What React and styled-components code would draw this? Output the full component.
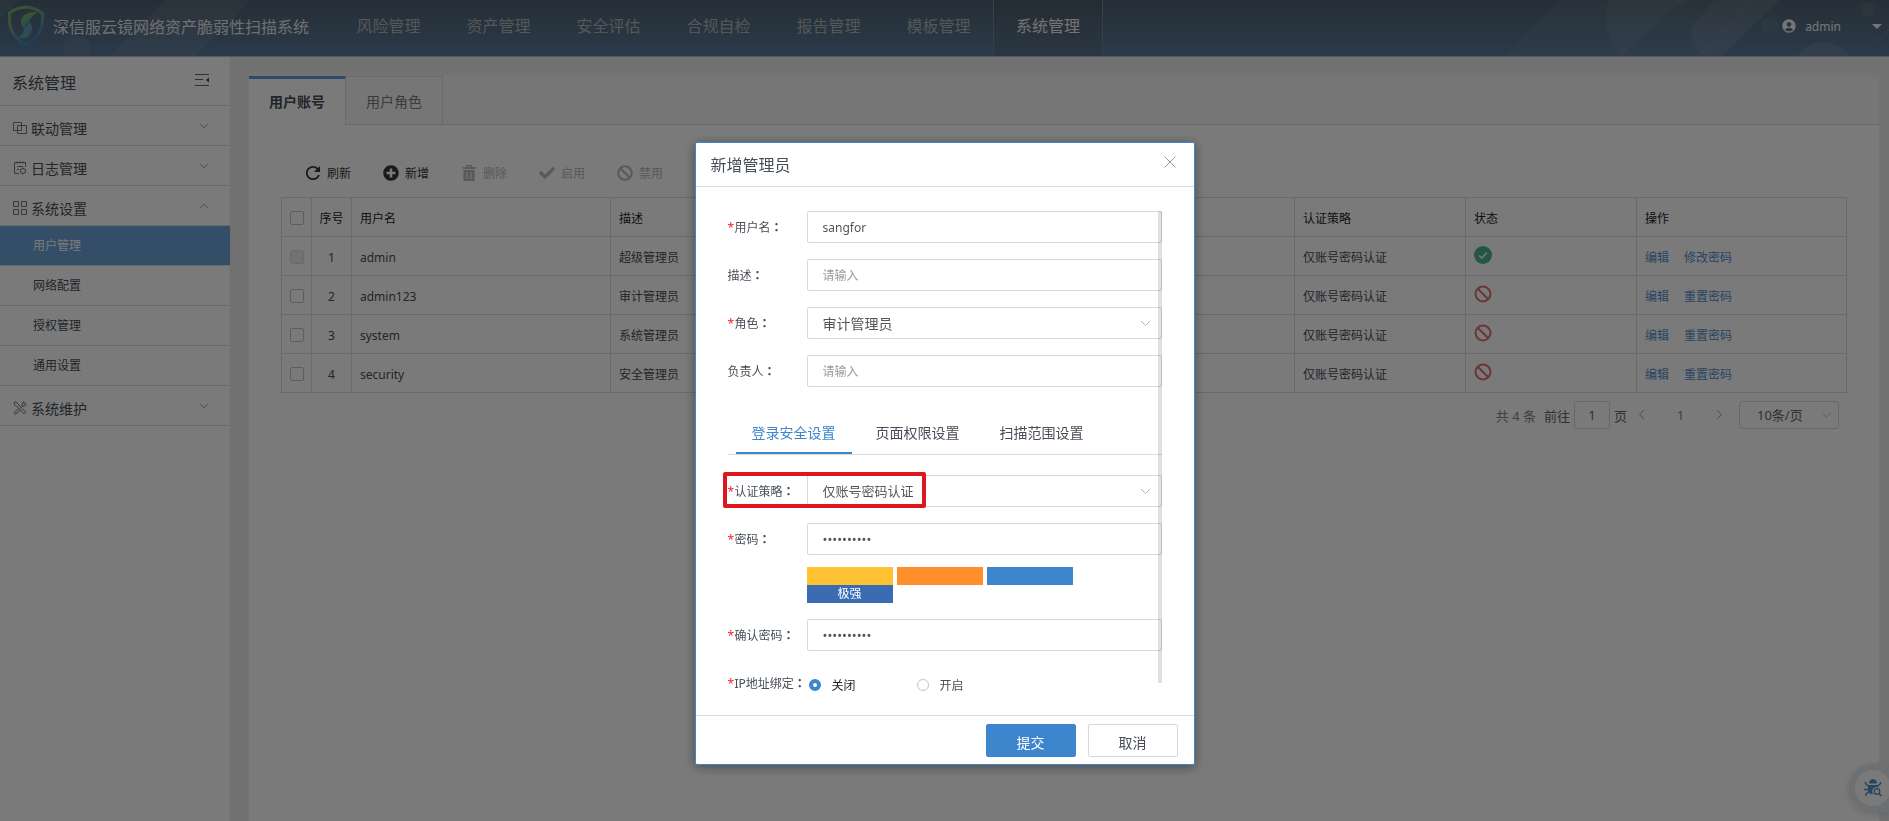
import React, { useState } from "react";
import styled, { createGlobalStyle, css } from "styled-components";
import { IoMdRefresh } from "react-icons/io";
import { FaPlusCircle, FaCheck, FaBan } from "react-icons/fa";
import { MdAccountCircle } from "react-icons/md";

const c = {
  blue: "#3d85cc",
  text: "#474e57",
  line: "#dcdcdc",
  muted: "#999",
};

const GlobalStyle = createGlobalStyle`
  *, *::before, *::after { box-sizing: border-box; }
  body {
    margin: 0;
    font-family: "Noto Sans", "Noto Sans CJK SC", sans-serif;
    font-size: 12px;
    color: ${c.text};
  }
  button, input, select { font-family: inherit; color: inherit; }
`;

const Page = styled.div`
  min-height: 100vh;
  display: flex;
  flex-direction: column;
  background: #efefef;
`;

/* ---------- header ---------- */
const Header = styled.header`
  position: relative;
  height: 57px;
  display: flex;
  align-items: stretch;
  background: linear-gradient(#4f6272, #5a7a9a);
  border-bottom: 1px solid #b4bcc4;
  overflow: hidden;
`;
const Pattern = styled.svg`
  position: absolute;
  top: 0;
  ${(p) => (p.$side === "left" ? "left: 0;" : "right: 0;")}
`;
const Brand = styled.div`
  position: relative;
  display: flex;
  align-items: center;
  gap: 8px;
  width: 333px;
  padding-left: 7px;
  padding-bottom: 4px;
  font-size: 16px;
  color: #e8e8e8;
  white-space: nowrap;
`;
const Nav = styled.nav`
  position: relative;
  display: flex;
  flex: 1;
`;
const NavLink = styled.a`
  width: 110px;
  line-height: 52px;
  text-align: center;
  font-size: 16px;
  text-decoration: none;
  border-left: 1px solid transparent;
  color: #b0b4b9;
  ${(p) =>
    p.$active &&
    css`
      color: #f0f0f0;
      border-color: #6b88a4;
      border-right: 1px solid #6b88a4;
      background: rgba(80, 40, 10, 0.08);
    `}
`;
const UserMenu = styled.button`
  position: relative;
  display: flex;
  align-items: center;
  padding: 0 7px 4px 0;
  border: 0;
  background: none;
  color: #f4f4f4;
  font-size: 12px;
`;
const UserName = styled.span`
  margin: 0 31px 0 8px;
`;
const Caret = styled.span`
  border: 5px solid transparent;
  border-top-color: #f4f4f4;
  border-bottom: 0;
`;

/* ---------- sidebar ---------- */
const Body = styled.div`
  flex: 1;
  display: flex;
`;
const Sidebar = styled.aside`
  width: 231px;
  flex: none;
  background: #fff;
  border-right: 1px solid #e6e6e6;
`;
const SideHead = styled.div`
  height: 49px;
  padding: 2px 21px 0 12px;
  display: flex;
  align-items: center;
  justify-content: space-between;
  border-bottom: 1px solid #e0e0e0;
  font-size: 16px;
`;
const IconButton = styled.button`
  display: flex;
  padding: 0;
  border: 0;
  background: none;
`;
const SideItem = styled.button`
  width: 100%;
  height: 40px;
  padding: 4px 21px 0 13px;
  display: flex;
  align-items: center;
  gap: 4px;
  border: 0;
  border-bottom: 1px solid #e0e0e0;
  background: none;
  font-size: 14px;
  text-align: left;
`;
const SideArrow = styled.span`
  display: flex;
  padding-bottom: 4px;
`;
const Grow = styled.span`
  flex: 1;
`;
const SubItem = styled.a`
  display: block;
  height: 40px;
  line-height: 40px;
  padding-left: 33px;
  border-bottom: 1px solid #e0e0e0;
  color: ${c.text};
  text-decoration: none;
  ${(p) =>
    p.$active &&
    css`
      color: #fff;
      background: #6fa4d8;
    `}
`;

/* ---------- main panel ---------- */
const Main = styled.main`
  flex: 1;
  min-width: 0;
  display: flex;
  padding: 19px 10px 0 18px;
`;
const Panel = styled.section`
  flex: 1;
  min-width: 0;
  background: #fff;
`;
const PageTabs = styled.div`
  display: flex;
  height: 49px;
  background: #f7f7f7;
  border-bottom: 1px solid #dedede;
`;
const PageTab = styled.button`
  width: 97px;
  height: 49px;
  padding: 0;
  border: 1px solid #dedede;
  border-left: 0;
  background: none;
  font-size: 14px;
  color: #777d85;
  ${(p) =>
    p.$active &&
    css`
      padding-bottom: 2px;
      border-bottom: 0;
      border-top: 3px solid #5d9cdb;
      background: #fff;
      font-weight: bold;
      color: ${c.text};
    `}
`;
const Toolbar = styled.div`
  display: flex;
  gap: 32px;
  padding: 36px 56px 0;
`;
const Tool = styled.button`
  display: flex;
  align-items: center;
  gap: 6px;
  height: 24px;
  padding: 0;
  border: 0;
  background: none;
  font-size: 12px;
  white-space: nowrap;
  color: #33383d;
  svg { width: 16px; height: 16px; flex: none; }
  &:disabled { color: #bababa; }
`;
const TableArea = styled.div`
  padding: 12px 32px 0;
`;
const Table = styled.table`
  width: 100%;
  table-layout: fixed;
  border-collapse: collapse;
  th, td {
    height: 39px;
    padding: 2px 8px 0;
    border: 1px solid #dedede;
    text-align: left;
    font-weight: normal;
    white-space: nowrap;
  }
  th { color: #1f2429; }
`;
const Centered = styled.td`
  && { text-align: center; padding: 2px 0 0; }
`;
const Col = styled.col`
  width: ${(p) => p.$w};
`;
const Check = styled.input`
  appearance: none;
  display: block;
  width: 14px;
  height: 14px;
  margin: 0 auto;
  border: 1px solid #c4c4c4;
  border-radius: 2px;
  background: #fff;
  &:disabled { background: #efefef; border-color: #dedede; }
`;
const Action = styled.a`
  margin-right: 15px;
  color: #5590cc;
  text-decoration: none;
`;
const StatusSvg = styled.svg`
  display: block;
  margin-bottom: 4px;
`;
const Pager = styled.div`
  display: flex;
  align-items: center;
  justify-content: flex-end;
  height: 28px;
  margin: 8px 8px 0 0;
  font-size: 13px;
  color: #666;
`;
const PagerText = styled.span`
  margin-right: ${(p) => p.$gap}px;
  color: ${(p) => (p.$light ? "#888" : "#666")};
`;
const PageInput = styled.input`
  width: 36px;
  height: 28px;
  margin-right: 4px;
  border: 1px solid #d8d8d8;
  border-radius: 3px;
  text-align: center;
  font-size: 13px;
`;
const PageButton = styled.button`
  width: ${(p) => p.$w}px;
  padding: 0;
  border: 0;
  background: none;
  font-size: 13px;
  color: ${(p) => (p.$current ? "#5590cc" : "#999")};
`;
const Helper = styled.button`
  position: fixed;
  right: 0;
  bottom: 9px;
  width: 40px;
  height: 48px;
  padding: 0 0 1px 6px;
  display: flex;
  align-items: center;
  border: 0;
  border-radius: 24px 0 0 24px;
  background: #e4eaf0;
  box-shadow: 0 2px 8px rgba(0, 0, 0, 0.15);
`;
const HelperDisc = styled.span`
  display: flex;
  flex: none;
  align-items: center;
  justify-content: center;
  width: 36px;
  height: 36px;
  border-radius: 50%;
  background: #fff;
`;

/* ---------- dialog ---------- */
const Overlay = styled.div`
  position: fixed;
  inset: 0;
  display: flex;
  justify-content: center;
  align-items: flex-start;
  padding-top: 142px;
  background: rgba(0, 0, 0, 0.52);
`;
const Dialog = styled.div`
  width: 500px;
  background: #fff;
  border: 1px solid ${c.blue};
  border-radius: 2px;
  box-shadow: 0 2px 12px rgba(0, 0, 0, 0.4);
`;
const DialogHead = styled.div`
  height: 44px;
  padding: 0 18px 0 15px;
  display: flex;
  align-items: center;
  justify-content: space-between;
  border-bottom: 1px solid ${c.line};
  ${IconButton} { padding-bottom: 6px; }
`;
const DialogTitle = styled.h2`
  margin: 0;
  font-size: 16px;
  line-height: 24px;
  font-weight: normal;
`;
const DialogBody = styled.div`
  padding: 24px 32px 12px;
`;
const Form = styled.form`
  position: relative;
  display: flex;
  flex-direction: column;
  gap: 16px;
`;
const Row = styled.div`
  display: flex;
  align-items: flex-start;
`;
const LabelBox = styled.label`
  width: 79px;
  height: 32px;
  flex: none;
  line-height: 32px;
  white-space: nowrap;
`;
const Star = styled.span`
  display: inline-block;
  width: 7px;
  font-size: 12px;
  color: #f5222d;
`;
const Colon = styled.span`
  font-family: "Noto Sans CJK TC", sans-serif;
  font-weight: bold;
`;
const Field = styled.div`
  flex: 1;
  min-width: 0;
`;
const fieldBox = css`
  display: block;
  width: 100%;
  height: 32px;
  padding: 0 15px;
  border: 1px solid #d9d9d9;
  border-radius: 2px;
  background: #fff;
  color: #555;
  outline: 0;
`;
const Input = styled.input`
  ${fieldBox}
  font-size: ${(p) => (p.type === "password" ? 13 : 12)}px;
  &::placeholder { color: ${c.muted}; }
`;
const SelectWrap = styled.div`
  position: relative;
  width: ${(p) => p.$w || "100%"};
`;
const Select = styled.select`
  ${fieldBox}
  appearance: none;
  font-size: ${(p) => (p.$dense ? 13 : 14)}px;
  ${(p) =>
    p.$small &&
    css`
      height: 28px;
      padding: 0 17px;
      font-size: 13px;
      border-radius: 3px;
      color: #666;
    `}
`;
const SelectArrow = styled.span`
  position: absolute;
  display: flex;
  right: ${(p) => p.$right}px;
  top: 0;
  bottom: 0;
  align-items: center;
  pointer-events: none;
`;
const FormTabs = styled.div`
  display: flex;
  gap: 8px;
  margin: 8px 0 4px;
  padding-left: 8px;
  height: 44px;
  border-bottom: 1px solid ${c.line};
`;
const FormTab = styled.button`
  height: 43px;
  padding: 0 16px;
  border: 0;
  border-bottom: 2px solid ${(p) => (p.$active ? c.blue : "transparent")};
  background: none;
  font-size: 14px;
  color: ${(p) => (p.$active ? c.blue : c.text)};
`;
const Strength = styled.div`
  display: flex;
  flex-wrap: wrap;
  column-gap: 4px;
  width: 266px;
  margin-top: 12px;
`;
const StrengthBar = styled.span`
  width: 86px;
  height: 18px;
  line-height: 18px;
  text-align: center;
  color: #fff;
  background: ${(p) => p.$color};
`;
const Marked = styled.div`
  position: relative;
  &::after {
    content: "";
    position: absolute;
    left: -5px;
    top: -3px;
    width: 203px;
    height: 36px;
    border: 4px solid #dc181d;
    border-radius: 2px;
    pointer-events: none;
  }
`;
const Radios = styled.div`
  display: flex;
  align-items: center;
  height: 36px;
  padding-left: 2px;
`;
const RadioLabel = styled.label`
  display: flex;
  align-items: center;
  gap: 11px;
  width: 108px;
  color: ${(p) => (p.$on ? "#222" : c.text)};
`;
const Radio = styled.input`
  appearance: none;
  width: 12px;
  height: 12px;
  margin: 0;
  border: 1px solid #c4c4c4;
  border-radius: 50%;
  &:checked { border: 4px solid ${c.blue}; }
`;
const Thumb = styled.div`
  position: absolute;
  top: 0;
  right: 0;
  width: 4px;
  height: 472px;
  background: rgba(0, 0, 0, 0.12);
`;
const DialogFoot = styled.div`
  display: flex;
  justify-content: flex-end;
  gap: 12px;
  padding: 8px 16px 7px;
  border-top: 1px solid ${c.line};
`;
const Button = styled.button`
  width: 90px;
  height: 33px;
  padding: 2px 0 0;
  border: 1px solid ${(p) => (p.$primary ? c.blue : "#d9d9d9")};
  border-radius: 2px;
  background: ${(p) => (p.$primary ? c.blue : "#fff")};
  color: ${(p) => (p.$primary ? "#fff" : c.text)};
  font-size: 14px;
`;

/* ---------- drawings ---------- */
const Chevron = ({ dir = "down", size = 10, color = "#999" }) => {
  const d = {
    down: "M1 3l4.5 4.5L10 3",
    up: "M1 8l4.5-4.5L10 8",
    left: "M8 1L3.500 5.500 8 10",
    right: "M3 1l4.500 4.500L3 10",
  }[dir];
  return (
    <svg width={size} height={size} viewBox="0 0 11 11" fill="none" stroke={color}>
      <path d={d} />
    </svg>
  );
};

const Logo = () => (
  <svg width="38" height="42" viewBox="0 0 38 42">
    <defs>
      <linearGradient id="lg" x1="0" y1="0" x2="0.5" y2="1">
        <stop offset="0" stopColor="#7cc04a" />
        <stop offset="0.5" stopColor="#6fa98f" />
        <stop offset="1" stopColor="#3f83c9" />
      </linearGradient>
    </defs>
    <path
      d="M19 2C13 2.500 7 4.500 2.500 8 2 18 1.500 31 19 39.500 36 31 36 19 35.500 8.500 31 5 25 2.500 19 2z"
      fill="none"
      stroke="url(#lg)"
      strokeWidth="3"
      opacity=".9"
    />
    <path
      d="M31 7.500c-8-2-16 2-17 8.500-.5 4 1.500 6.500 3.500 8 1-4 3-5 5-8 2-4 3-6 8.500-8.500z"
      fill="url(#lg)"
    />
    <path
      d="M22.500 17c4 4 3 12-2 15-3 2-7 2-10 .5 5-1.500 5-4 6.500-8 1-3 4-4 5.500-7.500z"
      fill="#5c9fb5"
    />
  </svg>
);

const OverlapIcon = () => (
  <svg width="14" height="14" viewBox="0 0 14 14" fill="none" stroke="#777">
    <path d="M4.500 9.500h-4v-8h8v3M4.500 9.500v3h9v-8h-5M8.500 4.500v5h-4v-5h4" />
  </svg>
);
const LogIcon = () => (
  <svg width="14" height="14" viewBox="0 0 14 14" fill="none" stroke="#777">
    <path d="M6 12.500H1.500v-11h11V6M4 .5v2M7 .5v2M10 .5v2M4 5.500h6M4 8.500h2" />
    <circle cx="10" cy="10" r="2.500" />
    <path d="M10 6.500v1M10 12.500v1M7 8.300l.8.5M12.200 11.200l.8.5M7 11.700l.8-.5M12.200 8.800l.8-.5" />
  </svg>
);
const GridIcon = () => (
  <svg width="14" height="14" viewBox="0 0 14 14" fill="none" stroke="#777">
    <path d="M.5.5h5v5h-5zM8.500.5h5v5h-5zM.5 8.500h5v5h-5zM8.500 8.500h5v5h-5z" />
  </svg>
);
const ToolsIcon = () => (
  <svg width="14" height="14" viewBox="0 0 14 14" fill="none" stroke="#777">
    <path d="M1 1.500l2-.8 2 2.300 7.800 8.300-1.500 1.700L3.500 5 1.500 3.800zM8 5.500l1.500-1.500-.2-2L11 .7l.3 2 2 .3-1.500 2-2 .2-1.300 1.400M6 7.500l-5 4.300 1.300 1.600L7.500 9" />
  </svg>
);
const FoldIcon = () => (
  <svg width="14" height="16" viewBox="0 0 14 16">
    <path d="M0 .5h14M0 5.500h8M0 11.500h14" stroke="#666" fill="none" />
    <path d="M14 3.500v5L11 6z" fill="#444" />
  </svg>
);
const TrashIcon = () => (
  <svg viewBox="0 0 16 16" fill="currentColor">
    <path
      fillRule="evenodd"
      d="M1.500 2H5V0h6v2h3.500v2h-13zM6.500 1.200V2h3v-.8zM2.500 5h11v11h-11zM5.500 7v7h1V7zM9.500 7v7h1V7z"
    />
  </svg>
);
const StatusIcon = ({ on }) => (
  <StatusSvg width="18" height="18" viewBox="0 0 18 18" fill="none" role="img">
    {on ? (
      <>
        <circle cx="9" cy="9" r="9" fill="#4db58e" />
        <path d="M5 9.500l3 2.500 5-5.500" stroke="#fff" strokeWidth="1.500" />
      </>
    ) : (
      <g stroke="#e07371" strokeWidth="2">
        <circle cx="9" cy="9" r="7.500" />
        <path d="M3.700 3.700l10.600 10.600" />
      </g>
    )}
  </StatusSvg>
);
const BugIcon = () => (
  <svg width="18" height="18" viewBox="0 0 18 18" fill="none" stroke="#5590cc">
    <path d="M5.500 4a3.500 3.500 0 0 1 7 0z" fill="#5590cc" />
    <path d="M4 6h10v2.500a4 4 0 0 0-4.500 6.500H8a4 4 0 0 1-4-4z" fill="#5590cc" stroke="none" />
    <path d="M4 7L1.500 4.500V3M14 7l2.500-2.500V3M4 10.500H0M4.500 13L2 15v2" strokeWidth="1.500" />
    <circle cx="13" cy="12.500" r="2.800" strokeWidth="1.300" />
    <path d="M15 14.500l2.500 2.500" strokeWidth="1.500" />
  </svg>
);
const CloseIcon = () => (
  <svg width="12" height="12" viewBox="0 0 12 12" stroke="#999">
    <path d="M.5.5l11 11M11.500.5l-11 11" />
  </svg>
);

/* ---------- content ---------- */
const navItems = ["风险管理", "资产管理", "安全评估", "合规自检", "报告管理", "模板管理", "系统管理"];
const users = [
  { id: 1, name: "admin", desc: "超级管理员", on: true, action: "修改密码" },
  { id: 2, name: "admin123", desc: "审计管理员", on: false, action: "重置密码" },
  { id: 3, name: "system", desc: "系统管理员", on: false, action: "重置密码" },
  { id: 4, name: "security", desc: "安全管理员", on: false, action: "重置密码" },
];

const FieldLabel = ({ htmlFor, required, children }) => (
  <LabelBox htmlFor={htmlFor}>
    {required && <Star>*</Star>}
    {children}
    <Colon>：</Colon>
  </LabelBox>
);

const SelectField = ({ id, value, dense }) => (
  <SelectWrap>
    <Select id={id} defaultValue={value} $dense={dense}>
      <option>{value}</option>
    </Select>
    <SelectArrow $right={11}>
      <Chevron size={11} color="#b5b5b5" />
    </SelectArrow>
  </SelectWrap>
);

const SideEntry = ({ icon, label, open }) => (
  <SideItem>
    {icon}
    <Grow>{label}</Grow>
    <SideArrow>
      <Chevron dir={open ? "up" : "down"} />
    </SideArrow>
  </SideItem>
);

export default function App() {
  const [bind, setBind] = useState("off");
  return (
    <>
      <GlobalStyle />
      <Page>
        <Header>
          <Pattern $side="left" width="260" height="56" fill="#fff">
            <path d="M0 0h20L0 18zM165 0h86l-56 56h-85z" opacity=".06" />
            <circle cx="77" cy="50" r="14" opacity=".06" />
          </Pattern>
          <Pattern $side="right" width="389" height="56" viewBox="1500 0 389 56" fill="#fff">
            <path d="M1560 0h220l-60 56h-215z" opacity=".04" />
            <path d="M1608 0h75l-62 56q-22-28-13-56z" opacity=".05" />
            <path d="M1715 0h65l-58 56h-18q-20-16-9-34z" opacity=".06" />
            <path d="M1753 0l-54 56M1889 30l-26 26" stroke="#fff" opacity=".1" />
            <circle cx="1681" cy="-2" r="7" opacity=".06" />
            <circle cx="1770" cy="25" r="9" opacity=".05" />
            <circle cx="1868" cy="9" r="7" opacity=".06" />
            <circle cx="1823" cy="72" r="30" opacity=".09" />
          </Pattern>
          <Brand>
            <Logo />
            深信服云镜网络资产脆弱性扫描系统
          </Brand>
          <Nav>
            {navItems.map((item) => (
              <NavLink key={item} href="#" $active={item === "系统管理"}>
                {item}
              </NavLink>
            ))}
          </Nav>
          <UserMenu>
            <MdAccountCircle size={16} />
            <UserName>admin</UserName>
            <Caret />
          </UserMenu>
        </Header>

        <Body>
          <Sidebar>
            <SideHead>
              系统管理
              <IconButton>
                <FoldIcon />
              </IconButton>
            </SideHead>
            <SideEntry icon={<OverlapIcon />} label="联动管理" />
            <SideEntry icon={<LogIcon />} label="日志管理" />
            <SideEntry icon={<GridIcon />} label="系统设置" open />
            {["用户管理", "网络配置", "授权管理", "通用设置"].map((item) => (
              <SubItem key={item} href="#" $active={item === "用户管理"}>
                {item}
              </SubItem>
            ))}
            <SideEntry icon={<ToolsIcon />} label="系统维护" />
          </Sidebar>

          <Main>
            <Panel>
              <PageTabs>
                <PageTab $active>用户账号</PageTab>
                <PageTab>用户角色</PageTab>
              </PageTabs>
              <Toolbar>
                <Tool><IoMdRefresh viewBox="56 56 400 400" />刷新</Tool>
                <Tool><FaPlusCircle />新增</Tool>
                <Tool disabled><TrashIcon />删除</Tool>
                <Tool disabled><FaCheck />启用</Tool>
                <Tool disabled><FaBan />禁用</Tool>
              </Toolbar>
              <TableArea>
                <Table>
                  <colgroup>
                    <Col $w="30px" />
                    <Col $w="40px" />
                    <Col $w="259px" />
                    <Col $w="auto" />
                    <Col $w="171px" />
                    <Col $w="171px" />
                    <Col $w="210px" />
                  </colgroup>
                  <thead>
                    <tr>
                      <Centered as="th"><Check type="checkbox" /></Centered>
                      <Centered as="th">序号</Centered>
                      <th>用户名</th>
                      <th>描述</th>
                      <th>认证策略</th>
                      <th>状态</th>
                      <th>操作</th>
                    </tr>
                  </thead>
                  <tbody>
                    {users.map((u) => (
                      <tr key={u.id}>
                        <Centered><Check type="checkbox" disabled={u.id === 1} /></Centered>
                        <Centered>{u.id}</Centered>
                        <td>{u.name}</td>
                        <td>{u.desc}</td>
                        <td>仅账号密码认证</td>
                        <td><StatusIcon on={u.on} /></td>
                        <td>
                          <Action href="#">编辑</Action>
                          <Action href="#">{u.action}</Action>
                        </td>
                      </tr>
                    ))}
                  </tbody>
                </Table>
                <Pager>
                  <PagerText $gap={8} $light>共 4 条</PagerText>
                  <PagerText as="label" htmlFor="page-no" $gap={4}>前往</PagerText>
                  <PageInput id="page-no" defaultValue="1" />
                  <PagerText $gap={0}>页</PagerText>
                  <PageButton $w={28}><Chevron dir="left" size={11} /></PageButton>
                  <PageButton $w={51}  $current>1</PageButton>
                  <PageButton $w={26}><Chevron dir="right" size={11} /></PageButton>
                  <PagerText $gap={7} />
                  <SelectWrap $w="100px">
                    <Select $small defaultValue="10条/页">
                      <option>10条/页</option>
                    </Select>
                    <SelectArrow $right={8}>
                      <Chevron size={9} color="#b5b5b5" />
                    </SelectArrow>
                  </SelectWrap>
                </Pager>
              </TableArea>
            </Panel>
          </Main>
        </Body>
        <Helper>
          <HelperDisc>
            <BugIcon />
          </HelperDisc>
        </Helper>
      </Page>

      <Overlay>
        <Dialog role="dialog" aria-modal="true">
          <DialogHead>
            <DialogTitle>新增管理员</DialogTitle>
            <IconButton>
              <CloseIcon />
            </IconButton>
          </DialogHead>
          <DialogBody>
            <Form id="admin-form" onSubmit={(e) => e.preventDefault()}>
              <Row>
                <FieldLabel htmlFor="name" required>用户名</FieldLabel>
                <Field><Input id="name" defaultValue="sangfor" /></Field>
              </Row>
              <Row>
                <FieldLabel htmlFor="desc">描述</FieldLabel>
                <Field><Input id="desc" placeholder="请输入" /></Field>
              </Row>
              <Row>
                <FieldLabel htmlFor="role" required>角色</FieldLabel>
                <Field><SelectField id="role" value="审计管理员" /></Field>
              </Row>
              <Row>
                <FieldLabel htmlFor="owner">负责人</FieldLabel>
                <Field><Input id="owner" placeholder="请输入" /></Field>
              </Row>
              <FormTabs>
                <FormTab type="button" $active>登录安全设置</FormTab>
                <FormTab type="button">页面权限设置</FormTab>
                <FormTab type="button">扫描范围设置</FormTab>
              </FormTabs>
              <Marked>
                <Row>
                  <FieldLabel htmlFor="policy" required>认证策略</FieldLabel>
                  <Field><SelectField id="policy" value="仅账号密码认证" dense /></Field>
                </Row>
              </Marked>
              <Row>
                <FieldLabel htmlFor="pwd" required>密码</FieldLabel>
                <Field>
                  <Input id="pwd" type="password" defaultValue="Sangfor123" />
                  <Strength>
                    <StrengthBar $color="#ffc233" />
                    <StrengthBar $color="#ff8f2d" />
                    <StrengthBar $color={c.blue} />
                    <StrengthBar $color="#3b6cb3">极强</StrengthBar>
                  </Strength>
                </Field>
              </Row>
              <Row>
                <FieldLabel htmlFor="pwd2" required>确认密码</FieldLabel>
                <Field><Input id="pwd2" type="password" defaultValue="Sangfor123" /></Field>
              </Row>
              <Row role="radiogroup">
                <FieldLabel htmlFor="bind-off" required>IP地址绑定</FieldLabel>
                <Radios>
                  <RadioLabel $on={bind === "off"}>
                    <Radio
                      id="bind-off"
                      type="radio"
                      name="bind"
                      checked={bind === "off"}
                      onChange={() => setBind("off")}
                    />
                    关闭
                  </RadioLabel>
                  <RadioLabel $on={bind === "on"}>
                    <Radio
                      type="radio"
                      name="bind"
                      checked={bind === "on"}
                      onChange={() => setBind("on")}
                    />
                    开启
                  </RadioLabel>
                </Radios>
              </Row>
              <Thumb />
            </Form>
          </DialogBody>
          <DialogFoot>
            <Button $primary type="submit" form="admin-form">提交</Button>
            <Button type="button">取消</Button>
          </DialogFoot>
        </Dialog>
      </Overlay>
    </>
  );
}
